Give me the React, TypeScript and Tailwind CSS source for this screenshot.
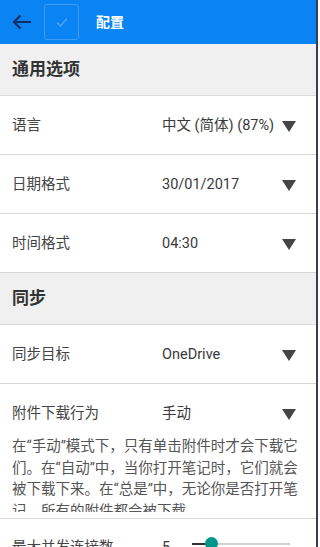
import React from "react";

const font = { fontFamily: 'Roboto, "Noto Sans CJK SC", sans-serif' };

function Tri() {
  return (
    <svg width="14" height="11" viewBox="0 0 14 11" className="shrink-0">
      <polygon points="0,0 14,0 7,11" fill="#454545" />
    </svg>
  );
}

function Section({ title }: { title: string }) {
  return (
    <div className="h-[52px] shrink-0 bg-[#f0f0f0] border-b border-[#dadada] flex items-center px-3 pt-[1px]">
      <span className="text-[17px] font-semibold text-[#333]">{title}</span>
    </div>
  );
}

function Row({ label, value }: { label: string; value: string }) {
  return (
    <div className="h-[59px] shrink-0 border-b border-[#d6d6d6] flex items-center pl-3 pr-[20px] pt-[2px]">
      <span className="w-[150px] text-[14.5px] text-[#444]">{label}</span>
      <span className="flex-1 text-[14.5px] text-[#3a3a3a]">{value}</span>
      <Tri />
    </div>
  );
}

export default function App() {
  return (
    <div className="w-[320px] h-[547px] overflow-hidden flex bg-white" style={font}>
      <div className="w-[316px] flex flex-col">
        <div className="h-[44px] bg-[#0a83f3] flex items-center shrink-0">
          <div className="w-[44px] flex justify-center">
            <svg width="20" height="16" viewBox="0 0 20 16">
              <path d="M19 8H2M8.5 1.5L2 8l6.5 6.5" stroke="#0e2f66" strokeWidth="2.2" fill="none" />
            </svg>
          </div>
          <div className="w-[35px] h-[36px] rounded-[3px] border border-[#3d9cf5] flex items-center justify-center">
            <svg width="14" height="12" viewBox="0 0 14 12">
              <path d="M2 6.5l3.5 3.5L12 2.5" stroke="#4ea8f7" strokeWidth="1.4" fill="none" />
            </svg>
          </div>
          <span className="ml-[17px] text-[14px] font-bold text-white">配置</span>
        </div>
        <Section title="通用选项" />
        <Row label="语言" value="中文 (简体) (87%)" />
        <Row label="日期格式" value="30/01/2017" />
        <Row label="时间格式" value="04:30" />
        <Section title="同步" />
        <Row label="同步目标" value="OneDrive" />
        <div className="border-b border-[#d6d6d6] pt-[20px] pb-[6px] shrink-0">
          <div className="flex items-center pl-3 pr-[20px] h-[20px]">
            <span className="w-[150px] text-[14.5px] text-[#444]">附件下载行为</span>
            <span className="flex-1 text-[14.5px] text-[#3a3a3a]">手动</span>
            <Tri />
          </div>
          <div className="mt-[12px] h-[76px] overflow-hidden px-3 text-[14.5px] leading-[21.5px] text-[#555]">
            在“手动”模式下，只有单击附件时才会下载它们。在“自动”中，当你打开笔记时，它们就会被下载下来。在“总是”中，无论你是否打开笔记，所有的附件都会被下载。
          </div>
        </div>
        <div className="flex items-center pl-3 pt-[18px] h-[40px] shrink-0">
          <span className="w-[150px] text-[14.5px] text-[#444]">最大并发连接数</span>
          <span className="w-[30px] text-[14.5px] text-[#3a3a3a]">5</span>
          <div className="relative w-[98px] h-[14px] -mt-[8px] flex items-center">
            <div className="h-[2px] w-[19px] bg-[#333]" />
            <div className="h-[2px] flex-1 bg-[#cfcfcf]" />
            <div className="absolute left-[13px] top-[0px] w-[13px] h-[13px] rounded-full bg-[#00968a]" />
          </div>
        </div>
      </div>
      <div className="w-[2px] bg-[#3c3b5c]" />
      <div className="w-[2px] bg-white" />
    </div>
  );
}
